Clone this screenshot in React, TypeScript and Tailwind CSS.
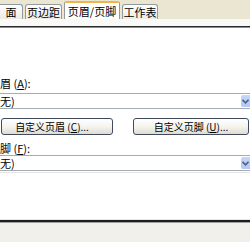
import React from "react";

const font = "font-['SimSun','Noto_Sans_CJK_SC','Noto_Sans_CJK_TC',sans-serif]";

function Tab({ label, className = "" }: { label: React.ReactNode; className?: string }) {
  return (
    <div
      className={`h-[15px] flex items-center justify-center border border-b-0 border-[#919b9c] rounded-t-[3px] bg-gradient-to-b from-[#fefefe] to-[#ecebe6] ${className}`}
    >
      {label}
    </div>
  );
}

function Select({ value }: { value: string }) {
  return (
    <div className="h-[16px] flex items-stretch border-y border-[#a5acb5] bg-white">
      <div className="flex-1 flex items-center leading-none">{value}</div>
      <div className="w-[9px] my-[1px] bg-gradient-to-b from-[#c6d6fb] to-[#b2c7f4] flex items-center justify-center rounded-l-[2px]">
        <svg width="7" height="5" viewBox="0 0 7 5">
          <path d="M0.5 0.8 L3.5 3.8 L6.5 0.8" fill="none" stroke="#4d6185" strokeWidth="1.6" />
        </svg>
      </div>
    </div>
  );
}

function Button({ children, className = "" }: { children: React.ReactNode; className?: string }) {
  return (
    <div
      className={`h-[17px] flex items-center justify-center border border-[#3f4b5c] rounded-[3px] bg-gradient-to-b from-[#ffffff] via-[#f5f4ef] to-[#dedcd2] leading-none text-[10px] ${className}`}
    >
      {children}
    </div>
  );
}

export default function App() {
  return (
    <div className={`w-[250px] h-[242px] bg-white flex flex-col overflow-hidden text-[11px] text-black ${font}`}>
      {/* tab strip */}
      <div className="h-[19px] shrink-0 bg-[#ebe6d2] flex items-end gap-[2px]">
        <Tab label="面" className="w-[23px] border-l-0 rounded-tl-none" />
        <Tab label="页边距" className="w-[37px]" />
        <div className="h-[18px] w-[56px] flex flex-col border-x border-[#919b9c] bg-white rounded-t-[3px] overflow-hidden">
          <div className="h-[2px] bg-[#f0b54a]" />
          <div className="flex-1 flex items-center justify-center">页眉/页脚</div>
        </div>
        <Tab label="工作表" className="w-[36px]" />
      </div>
      <div className="h-[7px] shrink-0 bg-[#f9f9f7]" />
      <div className="h-[1px] shrink-0 bg-[#2a2a2a]" />
      <div className="h-[1px] shrink-0 bg-[#8c8c8c]" />

      {/* content */}
      <div className="flex-1 flex flex-col">
        <div className="mt-[49px] h-[12px] leading-[12px]">
          眉 (<span className="underline">A</span>):
        </div>
        <div className="mt-[4px]">
          <Select value="无)" />
        </div>
        <div className="mt-[9px] flex">
          <Button className="ml-[1px] w-[112px] pr-[10px]">
            自定义页眉 (<span className="underline">C</span>)...
          </Button>
          <Button className="ml-[20px] w-[116px]">
            自定义页脚 (<span className="underline">U</span>)...
          </Button>
        </div>
        <div className="mt-[7px] h-[12px] leading-[12px]">
          脚 (<span className="underline">F</span>):
        </div>
        <div className="mt-[1px]">
          <Select value="无)" />
        </div>
        <div className="h-[1px] mt-[1px] bg-[#e4e4e4]" />
      </div>

      {/* bottom double line */}
      <div className="h-[1px] shrink-0 bg-[#e6e6e6]" />
      <div className="h-[2px] shrink-0 bg-[#1e1e1e]" />
      <div className="h-[1px] shrink-0 bg-[#a0a0a0]" />
      <div className="h-[19px] shrink-0 bg-[#f1f0eb]" />
    </div>
  );
}
